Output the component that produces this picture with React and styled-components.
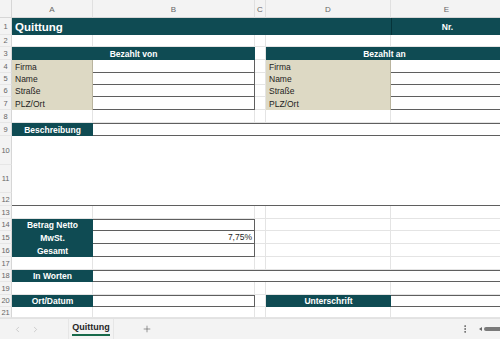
import React from 'react'
import styled, { createGlobalStyle, css } from 'styled-components'
import { ChevronLeft, ChevronRight, Plus, EllipsisVertical } from 'lucide-react'

const GlobalStyle = createGlobalStyle`
  html, body { margin: 0; padding: 0; background: #fff; }
  body { font-family: "Liberation Sans", Arial, sans-serif; overflow: hidden; }
  * { box-sizing: border-box; }
`

const COLS = [12, 81, 162, 11, 125, 112]
const ROWS = [18, 17, 12, 13, 13, 12, 12, 13, 13, 13, 29, 28, 13, 13, 12, 13, 13, 13, 12, 13, 12, 11]
const LETTERS = ['A', 'B', 'C', 'D', 'E']
const C = { A: 2, B: 3, C: 4, D: 5, E: 6 }

const TEAL = '#0f4b53'
const BEIGE = '#ddd9c4'
const LINE = '#5f5f5f'
const GRID = '#e4e4e4'

const Screen = styled.div`
  width: 500px;
  height: 339px;
  display: flex;
  flex-direction: column;
  overflow: hidden;
`

const Sheet = styled.div`
  display: grid;
  grid-template-columns: ${COLS.map(c => c + 'px').join(' ')};
  grid-template-rows: ${ROWS.map(r => r + 'px').join(' ')};
  flex: none;
  width: 503px;
`

const place = css`
  grid-row: ${p => p.$r + 1} / span ${p => p.$rs || 1};
  grid-column: ${p => p.$c} / span ${p => p.$cs || 1};
`

const Corner = styled.div`
  grid-row: 1;
  grid-column: 1;
  background: #f3f3f3;
  border-right: 1px solid #d6d6d6;
  border-bottom: 1px solid #d6d6d6;
`

const ColHead = styled.div`
  grid-row: 1;
  grid-column: ${p => p.$c};
  background: #f3f3f3;
  border-right: 1px solid #e0e0e0;
  border-bottom: 1px solid #d6d6d6;
  display: flex;
  align-items: flex-end;
  justify-content: center;
  padding-bottom: 3px;
  font-size: 8px;
  color: #666;
`

const RowHead = styled.div`
  grid-row: ${p => p.$r + 1};
  grid-column: 1;
  background: #f3f3f3;
  border-right: 1px solid #d6d6d6;
  border-bottom: 1px solid #e6e6e6;
  display: flex;
  align-items: center;
  justify-content: center;
  font-size: 7.5px;
  color: #666;
  letter-spacing: -0.2px;
`

const GridCell = styled.div`
  ${place};
  border-right: 1px solid ${GRID};
  border-bottom: 1px solid ${GRID};
`

const Band = styled.div`
  ${place};
  background: ${TEAL};
  color: #fff;
  font-weight: 700;
  font-size: ${p => (p.$title ? '11.5px' : '8.5px')};
  display: flex;
  align-items: center;
  justify-content: ${p => (p.$left ? 'flex-start' : 'center')};
  padding-left: ${p => (p.$left ? '3px' : '0')};
  border-left: ${p => (p.$divide ? '1px solid #06343a' : 'none')};
  white-space: nowrap;
  overflow: hidden;
`

const Label = styled.div`
  ${place};
  background: ${BEIGE};
  color: #1e1e1e;
  font-size: 8.5px;
  display: flex;
  align-items: center;
  padding-left: 3px;
  border-right: 1px solid #b9b49e;
`

const Box = styled.div`
  ${place};
  background: #fff;
  border-top: ${p => (p.$t ? `1px solid ${LINE}` : 'none')};
  border-bottom: ${p => (p.$b ? `1px solid ${LINE}` : 'none')};
  border-right: ${p => (p.$rt ? `1px solid ${LINE}` : 'none')};
  display: flex;
  align-items: center;
  justify-content: flex-end;
  padding-right: 2px;
  font-size: 8.5px;
  color: #1e1e1e;
`

const TabBar = styled.div`
  flex: 1;
  background: #f3f3f3;
  border-top: 1px solid #e2e2e2;
  display: flex;
  align-items: center;
  padding-left: 8px;
`

const Nav = styled.div`
  width: 18px;
  display: flex;
  justify-content: center;
  color: #b4b4b4;
`

const Tab = styled.div`
  margin-left: 24px;
  width: 46px;
  height: 100%;
  display: flex;
  flex-direction: column;
  align-items: center;
  justify-content: center;
  font-size: 9px;
  font-weight: 700;
  color: #262626;
  border-left: 1px solid #e6e6e6;
  border-right: 1px solid #e6e6e6;
  span {
    padding-bottom: 2px;
    border-bottom: 2px solid #17694a;
    line-height: 10px;
  }
`

const AddBtn = styled.div`
  margin-left: 21px;
  width: 24px;
  display: flex;
  justify-content: center;
  color: #555;
`

const Right = styled.div`
  margin-left: auto;
  display: flex;
  align-items: center;
  color: #555;
`

const Arrow = styled.div`
  margin-left: 9px;
  width: 0;
  height: 0;
  border-top: 2.5px solid transparent;
  border-bottom: 2.5px solid transparent;
  border-right: 3px solid #666;
`

const Thumb = styled.div`
  margin-left: 2px;
  width: 16px;
  height: 4px;
  border-radius: 2px 0 0 2px;
  background: #7a7a7a;
`

const rows = Array.from({ length: 21 }, (_, i) => i + 1)

export default function App() {
  return (
    <Screen>
      <GlobalStyle />
      <Sheet>
        <Corner />
        {LETTERS.map(l => (
          <ColHead key={l} $c={C[l]}>{l}</ColHead>
        ))}
        {rows.map(r => (
          <RowHead key={r} $r={r}>{r}</RowHead>
        ))}
        {rows.map(r =>
          LETTERS.map(l => <GridCell key={r + l} $r={r} $c={C[l]} />)
        )}

        <Band $r={1} $c={C.A} $cs={4} $left $title>Quittung</Band>
        <Band $r={1} $c={C.E} $divide>Nr.</Band>

        <Band $r={3} $c={C.A} $cs={2}>Bezahlt von</Band>
        <Band $r={3} $c={C.D} $cs={2}>Bezahlt an</Band>

        {['Firma', 'Name', 'Straße', 'PLZ/Ort'].map((t, i) => (
          <React.Fragment key={t}>
            <Label $r={4 + i} $c={C.A}>{t}</Label>
            <Box $r={4 + i} $c={C.B} $b $rt />
            <Label $r={4 + i} $c={C.D}>{t}</Label>
            <Box $r={4 + i} $c={C.E} $b />
          </React.Fragment>
        ))}

        <Band $r={9} $c={C.A}>Beschreibung</Band>
        <Box $r={9} $c={C.B} $cs={4} $t $b />
        <Box $r={10} $rs={3} $c={C.A} $cs={5} $b />

        <Band $r={14} $c={C.A}>Betrag Netto</Band>
        <Box $r={14} $c={C.B} $t $b $rt />
        <Band $r={15} $c={C.A}>MwSt.</Band>
        <Box $r={15} $c={C.B} $b $rt>7,75%</Box>
        <Band $r={16} $c={C.A}>Gesamt</Band>
        <Box $r={16} $c={C.B} $b $rt />

        <Band $r={18} $c={C.A}>In Worten</Band>
        <Box $r={18} $c={C.B} $cs={4} $t $b />

        <Band $r={20} $c={C.A}>Ort/Datum</Band>
        <Box $r={20} $c={C.B} $t $b $rt />
        <Band $r={20} $c={C.D}>Unterschrift</Band>
        <Box $r={20} $c={C.E} $t $b />
      </Sheet>

      <TabBar>
        <Nav><ChevronLeft size={9} strokeWidth={1.6} /></Nav>
        <Nav><ChevronRight size={9} strokeWidth={1.6} /></Nav>
        <Tab><span>Quittung</span></Tab>
        <AddBtn><Plus size={10} strokeWidth={1.4} /></AddBtn>
        <Right>
          <EllipsisVertical size={10} strokeWidth={2} />
          <Arrow />
          <Thumb />
        </Right>
      </TabBar>
    </Screen>
  )
}
